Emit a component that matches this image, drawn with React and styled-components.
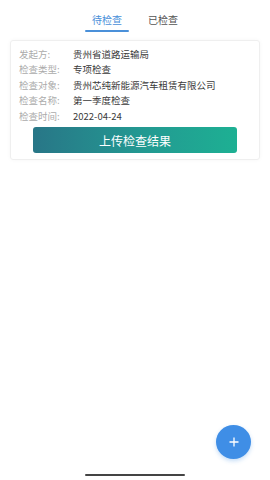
import styled, { createGlobalStyle } from 'styled-components';

const GlobalStyle = createGlobalStyle`
  html, body {
    margin: 0;
    padding: 0;
    background: #fff;
    font-family: "Noto Sans CJK SC", "Noto Sans", sans-serif;
  }
`;

const Page = styled.div`
  position: relative;
  width: 270px;
  height: 480px;
  overflow: hidden;
  background: #fff;
  display: flex;
  flex-direction: column;
`;

const Tabs = styled.div`
  display: flex;
  justify-content: center;
  gap: 18px;
  padding-top: 12px;
  height: 28px;
  box-sizing: content-box;
`;

const Tab = styled.div`
  position: relative;
  width: 38px;
  text-align: center;
  font-size: 10px;
  line-height: 16px;
  color: ${props => (props.active ? '#4a90d9' : '#555')};
  &::after {
    content: '';
    display: ${props => (props.active ? 'block' : 'none')};
    position: absolute;
    left: -3px;
    right: -3px;
    top: 18px;
    height: 2px;
    border-radius: 1px;
    background: #4a90d9;
  }
`;

const Card = styled.div`
  margin: 0 10px;
  padding: 6px 8px 6px;
  border: 1px solid #efefef;
  border-radius: 3px;
  box-shadow: 0 0 4px rgba(0, 0, 0, 0.04);
`;

const Row = styled.div`
  display: flex;
  font-size: 9.5px;
  line-height: 15.4px;
  white-space: nowrap;
`;

const Label = styled.span`
  width: 54px;
  color: #ababab;
`;

const Value = styled.span`
  color: #3a3a3a;
`;

const UploadButton = styled.div`
  margin: 3px 14px 0;
  height: 26px;
  border-radius: 3px;
  background: linear-gradient(90deg, #287687 0%, #239a92 55%, #1db093 100%);
  color: #fff;
  font-size: 12px;
  display: flex;
  align-items: center;
  justify-content: center;
`;

const Fab = styled.div`
  position: absolute;
  left: 216px;
  top: 425px;
  width: 35px;
  height: 34px;
  border-radius: 50%;
  background: #3f8ee6;
  box-shadow: 0 2px 4px rgba(63, 142, 230, 0.3);
  display: flex;
  align-items: center;
  justify-content: center;
`;

const HomeBar = styled.div`
  position: absolute;
  left: 85px;
  bottom: 4px;
  width: 100px;
  height: 2px;
  border-radius: 1px;
  background: #444;
`;

const rows = [
  ['发起方:', '贵州省道路运输局'],
  ['检查类型:', '专项检查'],
  ['检查对象:', '贵州芯纯新能源汽车租赁有限公司'],
  ['检查名称:', '第一季度检查'],
  ['检查时间:', '2022-04-24'],
];

const App = () => (
  <Page>
    <GlobalStyle />
    <Tabs>
      <Tab active>待检查</Tab>
      <Tab>已检查</Tab>
    </Tabs>
    <Card>
      {rows.map(([label, value]) => (
        <Row key={label}>
          <Label>{label}</Label>
          <Value>{value}</Value>
        </Row>
      ))}
      <UploadButton>上传检查结果</UploadButton>
    </Card>
    <Fab>
      <svg width="10" height="10" viewBox="0 0 10 10">
        <path d="M5 0.5v9M0.5 5h9" stroke="#fff" strokeWidth="1.3" />
      </svg>
    </Fab>
    <HomeBar />
  </Page>
);

export default App;
